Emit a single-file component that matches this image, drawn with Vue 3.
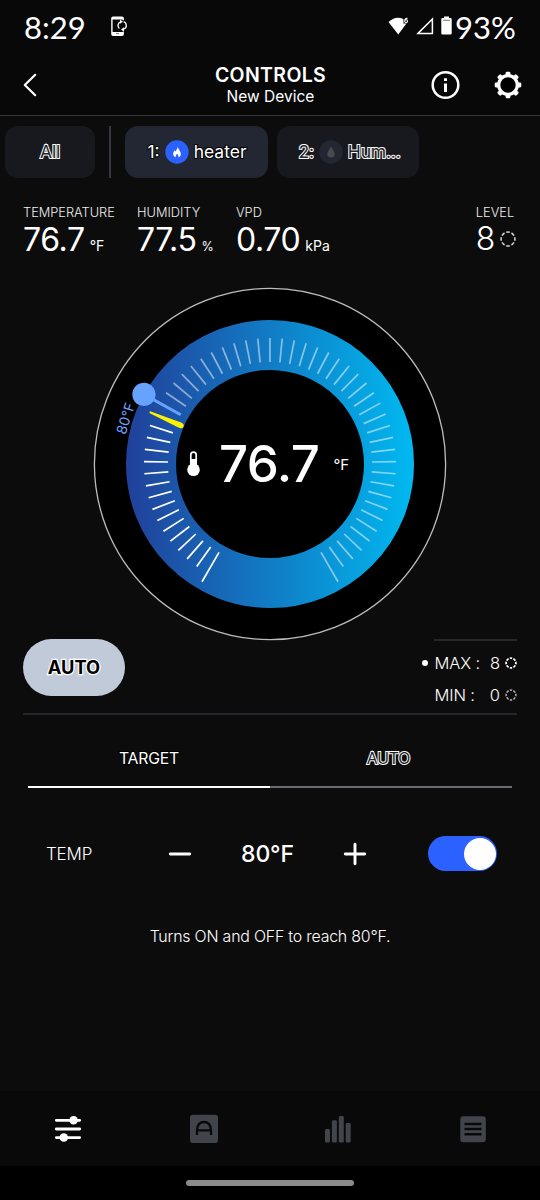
<script setup>
const readings = [
  { label: 'TEMPERATURE', value: '76.7', unit: '°F', cls: 'r-temp' },
  { label: 'HUMIDITY', value: '77.5', unit: '%', cls: 'r-hum' },
  { label: 'VPD', value: '0.70', unit: 'kPa', cls: 'r-vpd' },
]

const STEP = 300 / 54
const ticks = []
for (let i = -27; i <= 27; i++) {
  if (i === -12 || i === -11) continue
  ticks.push({ angle: i * STEP, outer: Math.abs(i) === 27 ? 136 : 126, lit: i < -12 })
}
</script>

<template>
  <div class="screen">
    <div class="status">
      <span class="clock">8:29</span>
      <svg class="sync" width="17" height="21" viewBox="0 0 17 21" fill="none">
        <path d="M12.2 4.2V2.6Q12.2 1.2 10.8 1.2H2.2Q.9 1.2.9 2.6V18Q.9 19.4 2.2 19.4H10.8Q12.2 19.4 12.2 18V15.8" stroke="#fff" stroke-width="1.4" />
        <path d="M1 1.2H12V3.4H1zM1 16H12V19.2H1z" fill="#fff" />
        <path d="M5 17.6H8" stroke="#777" />
        <path d="M8.4 12.6A4 4 0 0 1 9.6 5.8M12.6 5.6A4 4 0 0 1 13 13" stroke="#fff" stroke-width="1.3" />
        <path d="M9 3.4L12 5.8L9 7.8zM13 11.3L10 13.5L13 15.7z" fill="#fff" />
      </svg>
      <span class="grow"></span>
      <svg class="wifi" width="21" height="18" viewBox="0 0 21 18">
        <path d="M.5 5Q10 -3.6 19.5 5L10.3 17.5z" fill="#fff" />
        <rect x="15.5" y="0" width="5.5" height="6.5" fill="#080808" />
        <path d="M19.5 1.4Q16.7 1.2 16.7 4.2M16.7 4.2A1.4 1.4 0 1 0 19.5 4.2A1.4 1.4 0 1 0 16.7 4.2" fill="none" stroke="#fff" stroke-width="1.1" />
      </svg>
      <svg class="signal" width="18" height="18" viewBox="0 0 18 18">
        <path d="M2 16.4L16.4 2V16.4z" fill="none" stroke="#fff" stroke-width="1.5" />
      </svg>
      <svg class="battery" width="11" height="19" viewBox="0 0 11 19">
        <path d="M3 .5H8V2H9.5Q10.7 2 10.7 3.2V17.3Q10.7 18.5 9.5 18.5H1.5Q.3 18.5.3 17.3V3.2Q.3 2 1.5 2H3z" fill="#fff" />
        <path d="M2 4.3H9" stroke="#555" stroke-width=".8" />
      </svg>
      <span class="pct">93%</span>
    </div>

    <header class="header">
      <svg class="back" width="14" height="24" viewBox="0 0 14 24" fill="none">
        <path d="M12.2 1.8L1.8 12L12.2 22.2" stroke="#fff" stroke-width="2.2" stroke-linecap="round" stroke-linejoin="round" />
      </svg>
      <div class="titles">
        <h1>CONTROLS</h1>
        <p>New Device</p>
      </div>
      <div class="actions">
        <svg width="30" height="30" viewBox="0 0 30 30">
          <circle cx="15.5" cy="15" r="12.8" fill="none" stroke="#fff" stroke-width="2.5" />
          <path d="M14 8.3h3v2.8h-3zM14 13.4h3v8.6h-3z" fill="#fff" />
        </svg>
        <svg width="30" height="30" viewBox="0 0 30 30">
          <g fill="#fff">
            <rect v-for="a in 8" :key="a" x="12.6" y="1.7" width="4.8" height="6" rx="1.3" :transform="`rotate(${a * 45} 15 15)`" />
          </g>
          <circle cx="15" cy="15" r="9.3" fill="#000" stroke="#fff" stroke-width="3.2" />
        </svg>
      </div>
    </header>

    <nav class="devices">
      <div class="pill all"><span class="hollow">All</span></div>
      <div class="sep"></div>
      <div class="pill active">
        <span class="bright num">1:</span>
        <svg width="24" height="24" viewBox="0 0 24 24">
          <circle cx="12" cy="12" r="11.7" fill="#2b62ff" />
          <path d="M12.8 6.4C12.8 8.8 15.8 10.6 15.8 14C15.8 16.1 14.4 17.2 13.4 17.2C13.9 15.8 13 14.8 12.2 13.7C11.3 14.8 10.3 15.8 10.8 17.2C9.4 16.9 8.2 15.8 8.2 13.7C8.2 12.2 9 11.2 9.6 10.2L10.4 11.4C11.4 10 12.6 8.4 12.8 6.4z" fill="#fff" />
        </svg>
        <span class="bright name">heater</span>
      </div>
      <div class="pill idle">
        <span class="hollow num">2:</span>
        <svg width="24" height="24" viewBox="0 0 24 24">
          <circle cx="12" cy="12" r="11.7" fill="#232732" />
          <path d="M12 6.5C13 9 15.7 11.3 15.7 13.8A3.7 3.6 0 0 1 8.3 13.8C8.3 11.3 11 9 12 6.5z" fill="#484a4e" />
        </svg>
        <span class="hollow name">Hum...</span>
      </div>
    </nav>

    <section class="readings">
      <div v-for="r in readings" :key="r.label" class="reading" :class="r.cls">
        <div class="label">{{ r.label }}</div>
        <div class="value"><b>{{ r.value }}</b><small>{{ r.unit }}</small></div>
      </div>
      <div class="reading level">
        <div class="label">LEVEL</div>
        <div class="value">
          <b>8</b>
          <svg width="16" height="16" viewBox="0 0 16 16"><circle class="dash" cx="8" cy="8" r="6.9" pathLength="96" /></svg>
        </div>
      </div>
    </section>

    <svg class="dial" width="354" height="354" viewBox="-177 -177 354 354">
      <defs>
        <linearGradient id="ring" gradientUnits="userSpaceOnUse" x1="-144" y1="0" x2="144" y2="0">
          <stop offset="0" stop-color="#21409a" />
          <stop offset=".5" stop-color="#117cc5" />
          <stop offset="1" stop-color="#00b9f0" />
        </linearGradient>
      </defs>
      <circle r="175.6" fill="#000" stroke="#bdbdbd" stroke-width="1.3" />
      <circle r="119" fill="none" stroke="url(#ring)" stroke-width="50" />
      <line
        v-for="t in ticks" :key="t.angle" x1="0" x2="0" y1="-102" :y2="-t.outer"
        :class="t.lit ? 'tick lit' : 'tick'" :transform="`rotate(${t.angle})`"
      />
      <path d="M-.9 -131H.9L2.8 -98Q2.6 -94.2 0 -94.2Q-2.6 -94.2 -2.8 -98z" fill="#fff200" transform="rotate(-66.67)" />
      <g transform="rotate(-61.11)">
        <line y1="-102" y2="-144" stroke="#68a2ff" stroke-width="3" />
        <circle cy="-144" r="11.6" fill="#68a2ff" />
      </g>
      <text class="target" text-anchor="middle" transform="rotate(-72.5) translate(0 -146.5)">80°F</text>
      <g fill="#fff">
        <circle cx="-76.5" cy="5.8" r="6.3" />
        <rect x="-79.2" y="-11.8" width="5.4" height="16" rx="2.7" fill="#000" stroke="#fff" stroke-width="1.7" />
        <rect x="-79" y="-5" width="5" height="9" />
      </g>
      <text class="big" x="-51" y="18" textLength="101">76.7</text>
      <text class="deg" x="63.5" y="5.5">°F</text>
    </svg>

    <section class="mode">
      <div class="modebtn"><span>AUTO</span></div>
      <div class="limits">
        <div class="limit max">
          <i></i><span class="k">MAX :</span><span class="v">8</span>
          <svg width="12" height="12" viewBox="0 0 12 12"><circle class="dash strong" cx="6" cy="6" r="4.9" pathLength="96" /></svg>
        </div>
        <div class="limit">
          <span class="k">MIN :</span><span class="v">0</span>
          <svg width="12" height="12" viewBox="0 0 12 12"><circle class="dash faint" cx="6" cy="6" r="4.9" pathLength="96" /></svg>
        </div>
      </div>
    </section>

    <section class="tabs">
      <div class="tab on"><span class="bright">TARGET</span></div>
      <div class="tab"><span class="hollow">AUTO</span></div>
    </section>

    <section class="setting">
      <span class="temp">TEMP</span>
      <svg class="minus" width="24" height="24" viewBox="0 0 24 24"><path d="M2.3 12H21.7" /></svg>
      <span class="amount">80°F</span>
      <svg class="plus" width="24" height="24" viewBox="0 0 24 24"><path d="M2.3 12H21.7M12 2.3V21.7" /></svg>
      <div class="toggle"><i></i></div>
    </section>

    <p class="note"><span>Turns ON and OFF to reach 80°F.</span></p>

    <nav class="bottom">
      <div>
        <svg width="30" height="30" viewBox="0 0 30 30">
          <path d="M3.3 6.3H26.7M3.3 15H26.7M3.3 23.6H26.7" stroke="#fff" stroke-width="2.8" stroke-linecap="round" />
          <circle cx="20.6" cy="6.3" r="4.3" fill="#fff" /><circle cx="10.8" cy="23.5" r="4.3" fill="#fff" />
        </svg>
      </div>
      <div>
        <svg class="auto-icon" width="30" height="30" viewBox="0 0 30 30">
          <rect x="1" y=".7" width="28" height="28.4" rx="3" fill="#42444b" />
          <path d="M8 21V16Q8.6 8 15 8Q21.4 8 22 16V21M8.5 16.4H21.5" fill="none" stroke="#090909" stroke-width="2.3" />
        </svg>
      </div>
      <div>
        <svg width="30" height="30" viewBox="0 0 30 30" fill="#42444b">
          <rect x="2" y="15" width="5" height="13.5" rx="1.3" /><rect x="8.9" y="6.3" width="5" height="22.2" rx="1.3" />
          <rect x="15.8" y="2" width="5" height="26.5" rx="1.3" /><rect x="22.7" y="9" width="5" height="19.5" rx="1.3" />
        </svg>
      </div>
      <div>
        <svg width="30" height="30" viewBox="0 0 30 30">
          <rect x="2.3" y="2.3" width="25.5" height="26" rx="3" fill="#42444b" />
          <path d="M6.5 10H23.5M6.5 15.1H23.5M6.5 20.3H23.5" stroke="#090909" stroke-width="2.5" />
        </svg>
      </div>
    </nav>
    <div class="system"><i></i></div>
  </div>
</template>

<style>
body { margin: 0; background: #0c0c0c; }
</style>

<style scoped>
* { box-sizing: border-box; }
.screen { width: 540px; height: 1200px; display: flex; flex-direction: column; background: #0c0c0c; color: #fff; font-family: Inter, "Liberation Sans", sans-serif; overflow: hidden; }
svg { flex: none; display: block; }
.grow { flex: 1; }
h1, p { margin: 0; }

.status { height: 54px; flex: none; display: flex; align-items: center; padding: 1px 24px 0; background: #080808; font-family: Lato, Inter, sans-serif; font-size: 31px; line-height: 36px; }
.clock { width: 61px; white-space: nowrap; margin-top: -1px; }
.sync { margin: -2px 0 0 26px; }
.wifi { margin: -3px 7px 0 0; }
.signal { margin: -3px 7px 0 0; }
.battery { margin: -4px 3px 0 0; }
.pct { width: 61px; white-space: nowrap; margin-top: -1px; }

.header { height: 62px; flex: none; display: grid; grid-template-columns: 1fr auto 1fr; align-items: center; padding: 0 17px 0 23px; background: #080808; border-bottom: 1px solid #363636; }
.titles { text-align: center; padding: 1px 5px 0 0; }
h1 { font-size: 19.5px; line-height: 23px; font-weight: 600; letter-spacing: .35px; }
.titles p { font-size: 15.5px; line-height: 20px; letter-spacing: 0; }
.actions { display: flex; justify-content: flex-end; gap: 33px; }

.devices { height: 62px; flex: none; display: flex; padding: 10px 5px 0; }
.pill { height: 52px; border-radius: 13px; background: #18191e; display: flex; align-items: center; justify-content: center; font-size: 17.5px; padding-bottom: 1px; }
.pill svg { margin: 0 5px; }
.all { width: 90px; }
.sep { width: 2px; height: 52px; background: #37383d; margin: 0 14px; }
.active { width: 143px; background: #232733; margin-right: 9px; padding-left: 1px; }
.idle { width: 142px; }
.idle .num { margin-left: 3px; }
.bright { color: #fff; -webkit-text-stroke: 2px #000; paint-order: stroke fill; }
.hollow { color: #222328; -webkit-text-stroke: 2px #fff; paint-order: stroke fill; letter-spacing: -.2px; }

.readings { height: 94px; flex: none; display: flex; padding: 27px 24px 0 23px; }
.label { font-size: 12.8px; line-height: 16px; font-weight: 300; color: #eee; white-space: nowrap; }
.value { display: flex; align-items: baseline; line-height: 38px; white-space: nowrap; }
.value b { font-size: 32px; font-weight: 400; letter-spacing: -.4px; }
.value small { font-size: 14px; margin-left: 5px; }
.r-temp { width: 114px; }
.r-hum { width: 99px; }
.r-hum small { font-size: 12.5px; }
.level { margin-left: auto; }
.level .value { align-items: center; height: 36px; gap: 5px; }
.level b { font-weight: 300; }
.dash { fill: none; stroke: #d5d5d5; stroke-width: 1.5; stroke-dasharray: 8 4; stroke-dashoffset: 4; }
.strong { stroke: #fff; stroke-width: 1.8; }
.faint { stroke: #aaa; }

.dial { margin: 15px 0 0 93px; font-family: Inter, sans-serif; }
.tick { stroke: #fff; stroke-opacity: .5; stroke-width: 1.7; }
.tick.lit { stroke-opacity: 1; }
.target { font-size: 14px; fill: #68a2ff; letter-spacing: 0; }
.big { font-size: 51px; font-weight: 500; fill: #fff; }
.deg { font-size: 15px; fill: #fff; }

.mode { height: 77px; flex: none; margin: -3px 23px 0; display: flex; justify-content: space-between; border-bottom: 2px solid #26272c; padding-top: 1px; }
.modebtn { width: 102px; height: 57px; border-radius: 29px; background: #c1cad8; display: flex; align-items: center; justify-content: center; font-size: 18.3px; font-weight: 700; padding-bottom: 1px; }
.modebtn span { color: #000; -webkit-text-stroke: 2.5px #fff; paint-order: stroke fill; }
.limits { width: 83px; border-top: 2px solid #26272c; padding-top: 6px; }
.limit { height: 32px; display: flex; align-items: center; font-size: 16.5px; font-weight: 300; position: relative; white-space: nowrap; }
.limit .k { letter-spacing: -.15px; margin-left: .5px; }
.limit i { position: absolute; left: -12px; width: 6px; height: 6px; border-radius: 50%; background: #fff; }
.v { margin-left: auto; margin-right: 5px; }

.tabs { height: 74px; flex: none; margin: 0 28px; display: grid; grid-template-columns: 1fr 1fr; }
.tab { height: 73px; display: flex; align-items: center; justify-content: center; padding-top: 16px; border-bottom: 2px solid #6a6b70; font-size: 15.8px; letter-spacing: -.2px; }
.tab.on { border-color: #fff; }
.tab:last-child { padding-right: 5px; }

.setting { height: 132px; flex: none; display: grid; grid-template-columns: 122px 73px 102px 85px 69px; align-items: center; padding: 0 0 3px 46px; }
.temp { font-size: 17px; font-weight: 300; letter-spacing: -.2px; }
.setting path { stroke: #fff; stroke-width: 2.9; stroke-linecap: round; fill: none; }
.amount { font-size: 23px; font-weight: 500; letter-spacing: -.1px; }
.toggle { width: 69px; height: 35px; border-radius: 18px; background: #2b62ff; display: flex; align-items: center; justify-content: flex-end; padding-right: 1.5px; }
.toggle i { width: 32px; height: 32px; border-radius: 50%; background: #fff; }

.note { text-align: center; font-size: 15.9px; line-height: 20px; font-weight: 300; letter-spacing: -.2px; margin-top: 6px; }

.bottom { margin-top: auto; height: 75px; flex: none; background: #090909; display: grid; grid-template-columns: repeat(4, 1fr); align-items: center; justify-items: center; }
.auto-icon { margin-left: 2px; }
.system { height: 34px; flex: none; background: #000; display: flex; justify-content: center; padding-top: 14px; }
.system i { width: 168px; height: 6px; border-radius: 3px; background: #8b8b8b; }
</style>
